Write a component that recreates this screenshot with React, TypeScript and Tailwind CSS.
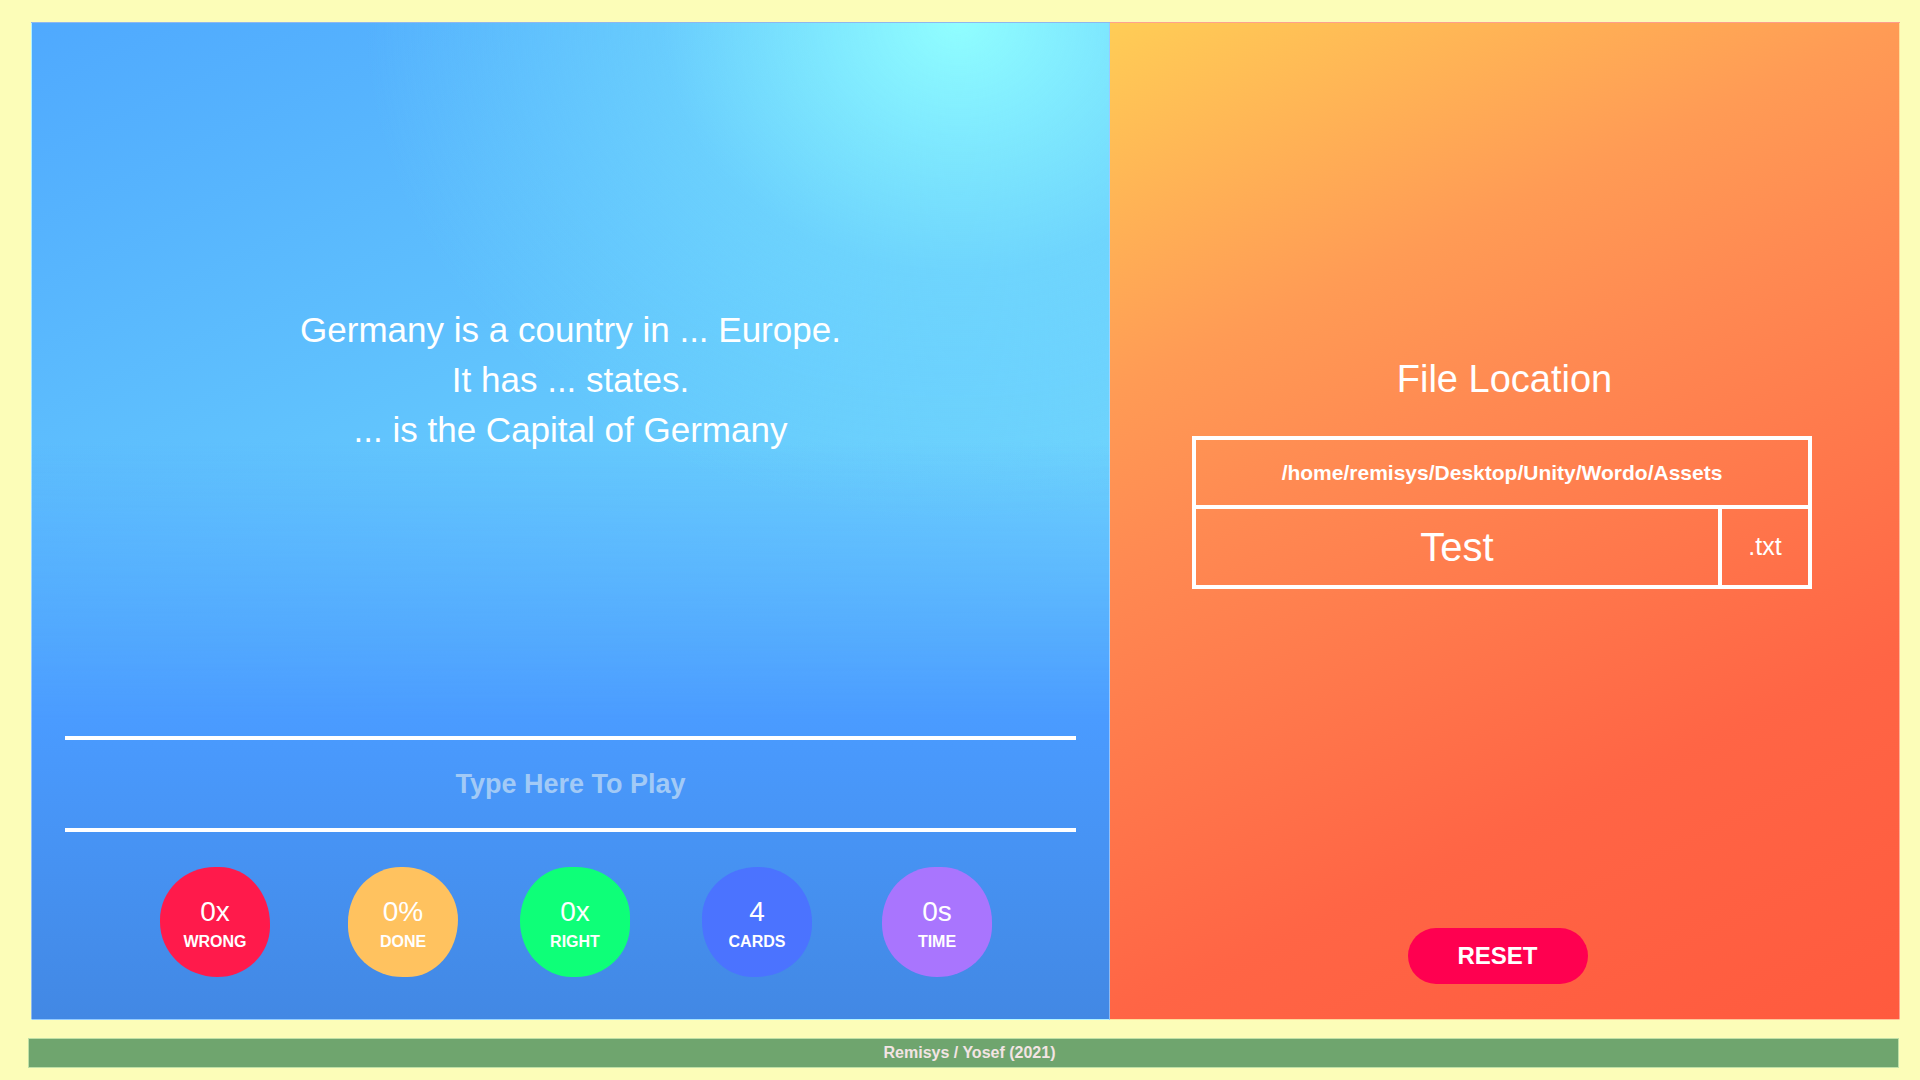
import { useState } from 'react';

const stats = [
  { value: '0x', label: 'WRONG', color: 'bg-[#ff1a4b]', shape: 'rounded-[50%_46%_48%_52%/48%_52%_46%_50%]', gap: 'ml-0' },
  { value: '0%', label: 'DONE', color: 'bg-[#ffc25f]', shape: 'rounded-[48%_50%_46%_50%/50%_48%_52%_46%]', gap: 'ml-[78px]' },
  { value: '0x', label: 'RIGHT', color: 'bg-[#0eff78]', shape: 'rounded-[46%_50%_50%_48%/50%_46%_48%_52%]', gap: 'ml-[62px]' },
  { value: '4', label: 'CARDS', color: 'bg-[#4b73ff]', shape: 'rounded-[50%_48%_50%_46%/46%_50%_48%_50%]', gap: 'ml-[72px]' },
  { value: '0s', label: 'TIME', color: 'bg-[#a975fe]', shape: 'rounded-[48%_46%_50%_50%/50%_50%_46%_48%]', gap: 'ml-[70px]' },
];

function StatBubble({ value, label, color, shape, gap }: { value: string; label: string; color: string; shape: string; gap: string }) {
  return (
    <div className={`${gap} w-[110px] h-[110px] ${color} ${shape} flex flex-col items-center justify-center gap-[5px] pt-[2px] text-white`}>
      <div className="text-[28px] leading-[32px] font-light">{value}</div>
      <div className="text-[16px] leading-[18px] font-bold">{label}</div>
    </div>
  );
}

export default function App() {
  const [answer, setAnswer] = useState('');
  const [fileName, setFileName] = useState('Test');

  return (
    <div className="w-full h-[1080px] bg-[#fcfdb8] font-['Liberation_Sans',Arial,sans-serif] overflow-hidden">
      <div className="flex ml-[31px] mt-[22px] w-[1869px] h-[998px]">
        {/* play area */}
        <div className="w-[1079px] h-full flex flex-col border border-white/40 bg-[image:linear-gradient(to_bottom,rgba(74,155,255,0)_42%,#4a9bff_70%,#4288e4_100%),radial-gradient(ellipse_55%_50%_at_86%_0%,#90feff_0%,rgba(120,225,253,0.5)_50%,rgba(110,215,253,0)_100%),linear-gradient(155deg,#4fa9fe_0%,#62c5fd_40%,#6fd5fd_70%)]">
          <div className="pt-[282px] h-[432px] text-center text-white text-[35px] leading-[50px]">
            <p>Germany is a country in ... Europe.</p>
            <p>It has ... states.</p>
            <p>... is the Capital of Germany</p>
          </div>

          <div className="mt-[281px] px-[33px]">
            <input
              value={answer}
              onChange={(e) => setAnswer(e.target.value)}
              placeholder="Type Here To Play"
              className="w-full h-[96px] bg-transparent border-y-4 border-white text-center text-white text-[27px] font-bold outline-none placeholder:text-[#a2caf6]"
            />
          </div>

          <div className="mt-[35px] flex pl-[128px]">
            {stats.map((s) => (
              <StatBubble key={s.label} {...s} />
            ))}
          </div>
        </div>

        {/* settings */}
        <div className="flex-1 h-full flex flex-col items-center border-y border-r border-white/40 bg-[image:linear-gradient(155deg,#ffcd56_0%,#ff9b55_27%,#ff8a52_40%,#ff6545_73%,#ff5a3e_100%)]">
          <h2 className="pt-[334px] text-white text-[38px] leading-[44px]">File Location</h2>

          <div className="mt-[35px] mr-[5px] w-[620px] h-[153px] border-4 border-white flex flex-col text-white">
            <div className="h-[65px] flex items-center justify-center text-[21px] font-bold">
              /home/remisys/Desktop/Unity/Wordo/Assets
            </div>
            <div className="flex-1 flex border-t-4 border-white">
              <input
                value={fileName}
                onChange={(e) => setFileName(e.target.value)}
                className="flex-1 min-w-0 bg-transparent text-center text-white text-[40px] outline-none"
              />
              <div className="w-[90px] border-l-4 border-white flex items-center justify-center text-[25px]">.txt</div>
            </div>
          </div>

          <button className="mt-auto mb-[35px] mr-[14px] w-[180px] h-[56px] rounded-full bg-[#ff0050] text-white text-[24px] font-bold">
            RESET
          </button>
        </div>
      </div>

      <div className="ml-[28px] mt-[18px] w-[1871px] h-[30px] bg-[#6fa56e] border border-[#bfe0a6] flex items-center justify-center pl-[12px] text-[16px] font-bold text-[#f3e4e4]">
        Remisys / Yosef (2021)
      </div>
    </div>
  );
}
